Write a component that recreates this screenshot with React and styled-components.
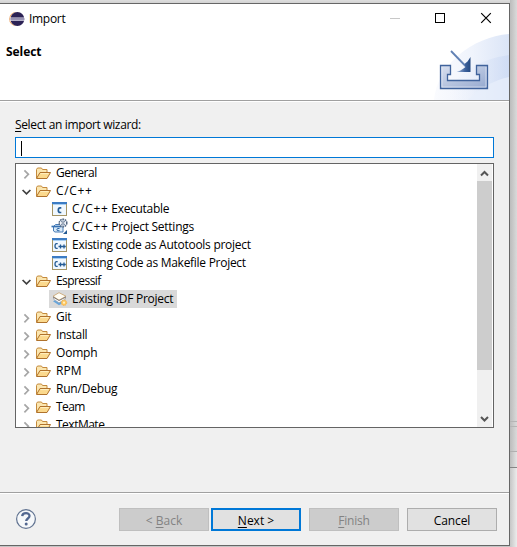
import React from "react";
import styled, { createGlobalStyle } from "styled-components";

const Global = createGlobalStyle`
  * { box-sizing: border-box; }
  html, body { margin: 0; overflow: hidden; background: #d6d6d6; }
  body { font: 12px/18px "Open Sans", "Noto Sans", sans-serif; color: #000; }
  svg { display: block; flex: none; }
`;

const Desktop = styled.div`
  display: grid;
  grid-template-columns: 510px 7px;
  width: 517px;
  height: 547px;
  overflow: hidden;
`;
const WindowArea = styled.div`
  padding-top: 3px;
  background: linear-gradient(#dedede 0, #d2d2d2 3px, #d2d2d2 540px, #c4c4c4);
`;
const Dialog = styled.main`
  display: flex;
  flex-direction: column;
  height: 543px;
  border: 1px solid #666;
  border-left: 0;
  background: #f0f0f0;
`;
const Behind = styled.div`
  display: flex;
  flex-direction: column;
`;
const BehindPane = styled.div`
  height: ${(p) => p.$h}px;
  border-bottom: 1px solid ${(p) => p.$line || "transparent"};
  background: linear-gradient(90deg, ${(p) => p.$from || "#bcbcbc"}, ${(p) => p.$to || "#dadada"});
`;

const TitleBar = styled.header`
  display: flex;
  align-items: center;
  height: 30px;
  padding-left: 9px;
  background: #fff;
`;
const Title = styled.span`
  flex: 1;
  padding: 0 0 1px 4px;
  letter-spacing: -0.3px;
`;
const Banner = styled.section`
  display: flex;
  justify-content: space-between;
  height: 66px;
  background: #fff;
`;
const Heading = styled.h1`
  margin: 9px 0 0 6px;
  font-size: 12px;
  line-height: 18px;
  font-weight: 700;
  letter-spacing: -0.05px;
`;
const Rule = styled.div`
  height: 2px;
  flex: none;
  background: linear-gradient(#a0a0a0 50%, #fff 50%);
`;
const Body = styled.section`
  height: 390px;
  padding: 14px 15px 0;
`;
const Label = styled.label`
  display: block;
  height: 21px;
  letter-spacing: -0.36px;
`;
const Mnemonic = styled.span`
  text-decoration: underline;
  text-underline-offset: 2px;
  text-decoration-thickness: 1px;
`;
const FilterField = styled.div`
  width: 479px;
  height: 21px;
  padding: 3px 5px;
  border: 1px solid #0078d7;
  background: #fff;
`;
const Caret = styled.div`
  width: 1px;
  height: 15px;
  background: #000;
`;
const TreeBox = styled.div`
  display: flex;
  width: 479px;
  height: 265px;
  margin-top: 5px;
  border: 1px solid #646464;
  background: #fff;
`;
const TreeList = styled.ul`
  flex: 1;
  margin: 0;
  padding: 0;
  overflow: hidden;
  list-style: none;
`;
const TreeRow = styled.li`
  display: flex;
  align-items: center;
  height: 18px;
  padding-left: ${(p) => (p.$child ? 33 : 5)}px;
`;
const RowContent = styled.div`
  display: flex;
  align-items: center;
  gap: ${(p) => (p.$child ? 4 : 5)}px;
  height: 18px;
  padding: 0 4px 0 ${(p) => (p.$child ? 3 : 2)}px;
  background: ${(p) => (p.$selected ? "#d9d9d9" : "transparent")};
`;
const RowText = styled.span`
  white-space: pre;
  letter-spacing: ${(p) => p.$track || 0}px;
`;
const Language = styled.span`
  letter-spacing: 0.65px;
`;
const ScrollBar = styled.div`
  display: flex;
  flex-direction: column;
  width: 15px;
  margin-right: 1px;
  background: #f0f0f0;
`;
const ScrollArrow = styled.div`
  display: flex;
  align-items: center;
  justify-content: center;
  height: 17px;
`;
const Thumb = styled.div`
  height: 189px;
  margin-bottom: auto;
  background: #cdcdcd;
`;
const Footer = styled.footer`
  display: flex;
  align-items: center;
  height: 51px;
  padding: 0 12px 0 15px;
`;
const ButtonRow = styled.div`
  display: flex;
  margin-left: auto;
`;
const Button = styled.button`
  width: 90px;
  height: 23px;
  margin: 0 0 0 ${(p) => p.$gap || 0}px;
  padding: ${(p) => (p.$primary ? 3 : 2)}px 0 0;
  border: ${(p) => (p.$primary ? "2px solid #0078d7" : `1px solid ${p.disabled ? "#bfbfbf" : "#adadad"}`)};
  background: ${(p) => (p.disabled ? "#cccccc" : "#e1e1e1")};
  color: ${(p) => (p.disabled ? "#838383" : "#000")};
  font: inherit;
  line-height: ${(p) => (p.$primary ? 16 : 18)}px;
  letter-spacing: ${(p) => p.$track || 0}px;
`;

const EclipseIcon = () => (
  <svg width="16" height="16" viewBox="0 0 16 16">
    <circle cx="7.2" cy="8" r="7" fill="#f0923a" />
    <circle cx="8.1" cy="8" r="7.1" fill="#fff" />
    <circle cx="8.4" cy="8" r="6.9" fill="#2c2255" />
    <path d="M0.5 7h15M0.5 9.100h15" stroke="#e4e2ef" strokeWidth="1.100" />
    <path d="M1.600 8.050h14" stroke="#a9a4c4" strokeWidth="1" />
  </svg>
);

const WindowControls = () => (
  <svg width="120" height="30" viewBox="389 4 120 30" fill="none" shapeRendering="crispEdges">
    <path d="M390 18.5h10" stroke="#c8c8c8" />
    <rect x="435.5" y="13.5" width="9" height="9" stroke="#000" />
    <path d="M481.2 13.200l9.600 9.600M490.800 13.200l-9.600 9.600" stroke="#000" strokeWidth="1.200" shapeRendering="auto" />
  </svg>
);

const ImportBanner = () => (
  <svg width="76" height="66" viewBox="433 34 76 66">
    <defs>
      <linearGradient id="sky" x1="0" x2="1">
        <stop offset="0" stopColor="#fafbfe" />
        <stop offset=".5" stopColor="#f0f4fc" />
        <stop offset="1" stopColor="#dbe5f7" />
      </linearGradient>
      <linearGradient id="ray" x1="0" x2="1">
        <stop offset="0" stopColor="#e6edfa" stopOpacity="0" />
        <stop offset="1" stopColor="#c8d7f3" />
      </linearGradient>
      <linearGradient id="tray" x1="0" x2="1" y2="1">
        <stop offset="0" stopColor="#d9e0ef" />
        <stop offset="1" stopColor="#94a8cf" />
      </linearGradient>
      <linearGradient id="head" x1="0" x2="1">
        <stop offset="0" stopColor="#a9bddc" />
        <stop offset=".6" stopColor="#3e639e" />
        <stop offset="1" stopColor="#244981" />
      </linearGradient>
    </defs>
    <path d="M434 100C437 65 472 37 509 34V100Z" fill="url(#sky)" />
    <path d="M449 100C449 75 480 59 509 55V100Z" fill="url(#ray)" opacity=".6" />
    <path d="M468 100C481 87 495 80 509 77V100Z" fill="#e8effb" opacity=".75" />
    <path d="M440.5 65.500h10v9h-3v6h32v-6h-3v-9h11v23h-47Z" fill="url(#tray)" stroke="#40639c" strokeWidth="1.300" />
    <path d="M442 67v20h44V67" fill="none" stroke="#e9eef8" strokeWidth=".8" opacity=".75" />
    <path d="M451 51l15 15.500" stroke="#6181b4" strokeWidth="1.800" />
    <path d="M470.500 57v15H456.500c3-1 5-2 7-3.500l2-1.500-1-3 3-2.500Z" fill="url(#head)" />
  </svg>
);

const Chevron = ({ open }) => (
  <svg width="12" height="12" viewBox="0 0 12 12" fill="none" strokeWidth="1.7">
    {open ? <path d="M1.600 5l3.900 3.900L9.400 5" stroke="#404040" /> : <path d="M3.400 3.300l4 4-4 4" stroke="#a6a6a6" />}
  </svg>
);

const FolderIcon = () => (
  <svg width="16" height="16" viewBox="0 0 16 16" strokeLinejoin="round">
    <path d="M1.500 13V4.500l1-1.500h4l1 1.500h4.500v3" fill="#fbe6b0" stroke="#c48a3c" />
    <path d="M1.500 13.500L5 7.500h10.500l-3.500 6Z" fill="#fbd98d" stroke="#b0722c" />
    <path d="M5.600 8.600h8" stroke="#fff0c4" />
  </svg>
);

const CodeWindowIcon = ({ plus }) => (
  <svg width="16" height="16" viewBox="0 0 16 16">
    <rect x=".5" y="1.500" width="14" height="13" fill="#f0f8ff" stroke="#a59565" />
    <path d="M0 2h15" stroke="#3c7cc4" strokeWidth="2" />
    <path d="M1 3.500h13" stroke="#a8cff3" />
    {plus ? (
      <path d="M5.700 6.700H4.500c-2 0-2 4.600 0 4.600H5.700M8.500 7.500v4M6.500 9.500h4M12 7.500v4M10.500 9.500h3.300" fill="none" stroke="#245b94" strokeWidth="1.300" />
    ) : (
      <path d="M9.300 6.900H8c-2.200 0-2.200 4.600 0 4.600h1.300" fill="none" stroke="#245b94" strokeWidth="1.700" />
    )}
  </svg>
);

const SettingsIcon = () => (
  <svg width="18" height="18" viewBox="0 0 18 18">
    <path d="M2.500 8.500l2-2h6l1.500 2v5.500h-8l-1.500-1Z" fill="#d8e9f8" stroke="#497db7" />
    <path d="M0.500 8.500h10" stroke="#3972b3" strokeWidth="1.700" />
    <path d="M8.500 10.500H7c-1.500 0-1.500 2.200 0 2.200h1.500" fill="none" stroke="#2b65a4" />
    <circle cx="12" cy="5" r="3.800" fill="#f7faff" stroke="#50647f" strokeWidth="1.500" strokeDasharray="1.700 .7" />
    <path d="M9.500 2.500l5 5M14.500 2.500l-5 5M12 1.500v7" stroke="#607898" strokeWidth=".8" />
    <circle cx="12" cy="5" r="1.100" fill="#fff" stroke="#50647f" strokeWidth=".6" />
    <path d="M16 12v4h-4Z" fill="#245b94" />
  </svg>
);
const SettingsSlot = styled.span`
  margin: 0 -1px;
`;

const IdfIcon = () => (
  <svg width="16" height="16" viewBox="0 0 16 16">
    <path d="M1 10.300l6-3.500 7 3.500-7 4Z" fill="#68a5da" />
    <path d="M1 7.700L7 4l7 3.700-7 4Z" fill="#fff" stroke="#9299a2" strokeWidth=".6" />
    <path d="M1 5.200L7 1.700l7 3.500-7 4Z" fill="#fffdf5" stroke="#c8a16b" strokeWidth=".8" />
    <path d="M1 6l6 3.500L14 6" fill="none" stroke="#68625f" strokeWidth=".8" />
    <circle cx="12" cy="11.700" r="2.700" fill="#ffc65e" stroke="#f2b454" strokeDasharray="1.300 .7" />
    <circle cx="12" cy="11.700" r="1.100" fill="#fff2c8" />
  </svg>
);

const ScrollChevron = ({ down }) => (
  <svg width="9" height="8" viewBox="0 0 9 8">
    <path d={down ? "M1 2l3.500 3.500L8 2" : "M1 6.500L4.500 3 8 6.500"} fill="none" stroke="#555" strokeWidth="2" />
  </svg>
);

const HelpIcon = () => (
  <svg width="22" height="22" viewBox="0 0 22 22" fill="none">
    <circle cx="11" cy="10" r="9.400" fill="#f6f8fa" stroke="#617391" strokeWidth="1.200" />
    <path d="M7.200 7.200c.3-4.200 7.500-4 7.300-.2-.1 2.500-3.300 2.500-3.300 5.100" stroke="#526790" strokeWidth="2.300" />
    <circle cx="11.200" cy="14.900" r="1.500" fill="#526790" />
  </svg>
);

const icons = {
  exe: <CodeWindowIcon />,
  make: <CodeWindowIcon plus />,
  settings: <SettingsSlot><SettingsIcon /></SettingsSlot>,
  idf: <IdfIcon />,
};

const rows = [
  { text: "General", track: -0.5 },
  { lang: "C/C++", text: "", open: true },
  { lang: "C/C++", text: " Executable", icon: "exe", track: -0.3 },
  { lang: "C/C++", text: " Project Settings", icon: "settings", track: -0.26 },
  { text: "Existing code as Autotools project", icon: "make", track: -0.27 },
  { text: "Existing Code as Makefile Project", icon: "make", track: -0.28 },
  { text: "Espressif", open: true, track: -0.57 },
  { text: "Existing IDF Project", icon: "idf", selected: true, track: -0.26 },
  { text: "Git", track: -0.3 },
  { text: "Install", track: -0.3 },
  { text: "Oomph", track: -0.2 },
  { text: "RPM", track: 0 },
  { text: "Run/Debug", track: -0.2 },
  { text: "Team", track: -0.6 },
  { text: "TextMate", track: -0.5 },
];

export default function App() {
  return (
    <>
      <Global />
      <Desktop>
        <WindowArea>
          <Dialog>
            <TitleBar>
              <EclipseIcon />
              <Title>Import</Title>
              <WindowControls />
            </TitleBar>
            <Banner>
              <Heading>Select</Heading>
              <ImportBanner />
            </Banner>
            <Rule />
            <Body>
              <Label><Mnemonic>S</Mnemonic>elect an import wizard:</Label>
              <FilterField><Caret /></FilterField>
              <TreeBox>
                <TreeList>
                  {rows.map((r, i) => (
                    <TreeRow key={i} $child={!!r.icon}>
                      {!r.icon && <Chevron open={r.open} />}
                      <RowContent $child={!!r.icon} $selected={r.selected}>
                        {r.icon ? icons[r.icon] : <FolderIcon />}
                        <RowText $track={r.track}>
                          {r.lang && <Language>{r.lang}</Language>}
                          {r.text}
                        </RowText>
                      </RowContent>
                    </TreeRow>
                  ))}
                </TreeList>
                <ScrollBar>
                  <ScrollArrow><ScrollChevron /></ScrollArrow>
                  <Thumb />
                  <ScrollArrow><ScrollChevron down /></ScrollArrow>
                </ScrollBar>
              </TreeBox>
            </Body>
            <Rule />
            <Footer>
              <HelpIcon />
              <ButtonRow>
                <Button disabled>&lt; <Mnemonic>B</Mnemonic>ack</Button>
                <Button $primary $gap={2}><Mnemonic>N</Mnemonic>ext &gt;</Button>
                <Button disabled $gap={8} $track={-0.2}><Mnemonic>F</Mnemonic>inish</Button>
                <Button $gap={8} $track={-0.1}>Cancel</Button>
              </ButtonRow>
            </Footer>
          </Dialog>
        </WindowArea>
        <Behind>
          <BehindPane $h={422} $line="#b5b5b5" />
          <BehindPane $h={5} $line="#b5b5b5" />
          <BehindPane $h={25} $line="#b0b0b0" />
          <BehindPane $h={16} $line="#858585" $to="#e4e4e4" />
          <BehindPane $h={79} $from="#c6c6c6" $to="#ececec" />
        </Behind>
      </Desktop>
    </>
  );
}
